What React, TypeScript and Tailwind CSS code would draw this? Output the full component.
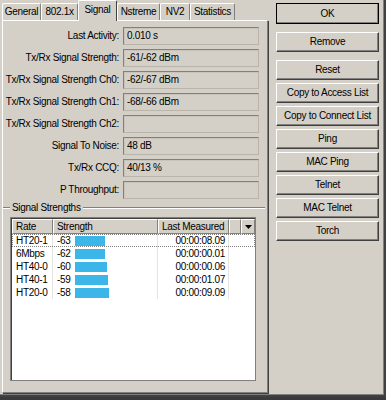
import type { ReactNode } from 'react';

const fields: [string, string][] = [
  ['Last Activity:', '0.010 s'],
  ['Tx/Rx Signal Strength:', '-61/-62 dBm'],
  ['Tx/Rx Signal Strength Ch0:', '-62/-67 dBm'],
  ['Tx/Rx Signal Strength Ch1:', '-68/-66 dBm'],
  ['Tx/Rx Signal Strength Ch2:', ''],
  ['Signal To Noise:', '48 dB'],
  ['Tx/Rx CCQ:', '40/13 %'],
  ['P Throughput:', ''],
];

const rates = [
  { rate: 'HT20-1', strength: '-63', bar: 30, last: '00:00:08.09' },
  { rate: '6Mbps', strength: '-62', bar: 30, last: '00:00:00.01' },
  { rate: 'HT40-0', strength: '-60', bar: 32, last: '00:00:00.06' },
  { rate: 'HT40-1', strength: '-59', bar: 33, last: '00:00:01.07' },
  { rate: 'HT20-0', strength: '-58', bar: 34, last: '00:00:09.09' },
];

const tabs = ['General', '802.1x', 'Signal', 'Nstreme', 'NV2', 'Statistics'];
const tabWidths: Record<string, string> = {
  General: 'w-[39px]',
  '802.1x': 'w-[37px]',
  Signal: 'w-[39px]',
  Nstreme: 'w-[43px]',
  NV2: 'w-[30px]',
  Statistics: 'w-[45px]',
};

const buttons = ['Copy to Access List', 'Copy to Connect List', 'Ping', 'MAC Ping', 'Telnet', 'MAC Telnet', 'Torch'];

function WinButton({ children, isDefault, className = '' }: { children: ReactNode; isDefault?: boolean; className?: string }) {
  return (
    <button
      className={`w-[103px] flex items-center justify-center bg-[#d4d0c8] text-black font-normal border ${
        isDefault ? 'border-black' : 'border-t-white border-l-white border-r-[#404040] border-b-[#404040]'
      } shadow-[inset_-1px_-1px_0_#808080] ${className}`}
    >
      {children}
    </button>
  );
}

function HeaderCell({ children, className = '' }: { children?: ReactNode; className?: string }) {
  return (
    <div
      className={`h-[15px] flex items-center border-t border-l border-t-white border-l-white border-r border-b border-r-[#808080] border-b-[#808080] ${className}`}
    >
      {children}
    </div>
  );
}

export default function App() {
  return (
    <div className="w-[386px] h-[400px] bg-[#3a3a3a] font-['Liberation_Sans',Arial,sans-serif] text-[10px] tracking-[-0.3px] text-black leading-none">
      <div className="w-[386px] h-[397px] bg-[#d4d0c8] flex border-r-2 border-b-2 border-r-[#404040] border-b-[#404040] shadow-[inset_-1px_-1px_0_#808080]">
        {/* Tabs + panel */}
        <div className="ml-[2px] w-[266px] flex flex-col">
          <div className="h-[21px] flex items-end relative z-10">
            {tabs.map((t) =>
              t === 'Signal' ? (
                <div
                  key={t}
                  className={`${tabWidths[t]} h-[21px] flex items-start justify-center pt-[4px] bg-[#d4d0c8] border-t border-l border-r border-t-white border-l-white border-r-[#404040] rounded-t-[2px]`}
                >
                  {t}
                </div>
              ) : (
                <div
                  key={t}
                  className={`${tabWidths[t]} h-[17px] mb-px flex items-center justify-center bg-[#d4d0c8] border-t border-l border-r border-t-white border-l-white border-r-[#808080] rounded-t-[2px]`}
                >
                  {t}
                </div>
              )
            )}
          </div>
          <div className="-mt-px h-[373px] flex flex-col border border-t-white border-l-white border-r-[#808080] border-b-[#808080] shadow-[1px_1px_0_#404040]">
            <div className="pt-[6px] flex flex-col gap-[4px]">
              {fields.map(([label, value]) => (
                <div key={label} className="flex items-center h-[18px]">
                  <div className="w-[116px] text-right whitespace-nowrap">{label}</div>
                  <div className="ml-[4px] w-[136px] h-[18px] flex items-center pl-[3px] border border-t-[#808080] border-l-[#808080] border-r-[#b8b4ac] border-b-[#b8b4ac] shadow-[inset_1px_1px_0_#c8c4bc]">
                    {value}
                  </div>
                </div>
              ))}
            </div>

            {/* Signal Strengths group */}
            <div className="mt-[3px] flex items-center h-[12px]">
              <div className="w-[7px] border-t border-b border-t-[#808080] border-b-white" />
              <span className="px-[2px]">Signal Strengths</span>
              <div className="flex-1 mr-[2px] border-t border-b border-t-[#808080] border-b-white" />
            </div>

            <div className="mt-[3px] ml-[7px] w-[246px] h-[164px] bg-white border border-[#808080] shadow-[inset_1px_1px_0_#404040]">
              <div className="flex bg-[#d4d0c8] ml-px mt-px">
                <HeaderCell className="w-[41px] pl-[3px]">Rate</HeaderCell>
                <HeaderCell className="w-[105px] pl-[3px]">Strength</HeaderCell>
                <HeaderCell className="w-[71px] pl-[3px]">Last Measured</HeaderCell>
                <HeaderCell className="w-[12px]" />
                <HeaderCell className="w-[14px] justify-center">
                  <svg width="7" height="4" viewBox="0 0 7 4">
                    <polygon points="0,0 7,0 3.5,4" fill="#000" />
                  </svg>
                </HeaderCell>
              </div>
              {rates.map((r, i) => (
                <div
                  key={r.rate}
                  className={`flex h-[13px] ml-px ${i === 0 ? 'outline outline-1 outline-dotted outline-[#808080] -outline-offset-1' : ''}`}
                >
                  <div className="w-[41px] pl-[4px] flex items-center border-r border-[#e4e4e4]">{r.rate}</div>
                  <div className="w-[105px] pl-[4px] flex items-center border-r border-[#e4e4e4]">
                    <span className="w-[18px]">{r.strength}</span>
                    <div className="h-[10px] bg-[#3cb6e8]" style={{ width: r.bar }} />
                  </div>
                  <div className="w-[71px] pr-[3px] flex items-center justify-end border-r border-[#e4e4e4]">{r.last}</div>
                </div>
              ))}
            </div>
          </div>
        </div>

        {/* Buttons */}
        <div className="ml-[8px] pt-[3px] flex flex-col">
          <WinButton isDefault className="h-[21px]">OK</WinButton>
          <WinButton className="h-[20px] mt-[8px]">Remove</WinButton>
          <WinButton className="h-[20px] mt-[8px]">Reset</WinButton>
          {buttons.map((b) => (
            <WinButton key={b} className="h-[20px] mt-[3px]">
              {b}
            </WinButton>
          ))}
        </div>
      </div>
    </div>
  );
}
